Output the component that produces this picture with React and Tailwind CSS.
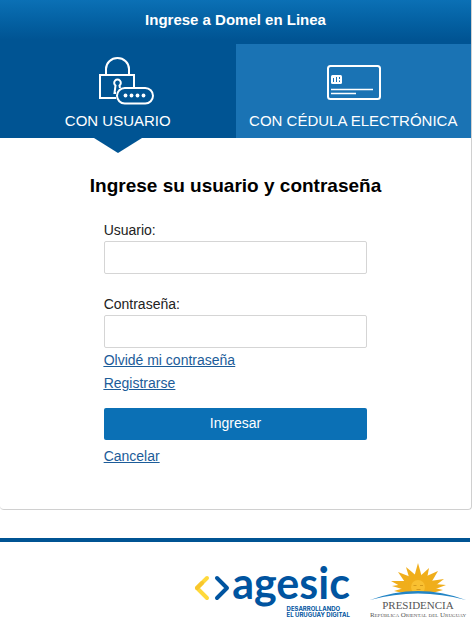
import { useState } from 'react'
import clsx from 'clsx'

const RAYS = [
  'M42 33 L24 29 L41 24 Z',
  'M41 30 L21 19 L43 19 Z',
  'M39 26 L28 10 L46 17 Z',
  'M41 22 L36 5 L49 16 Z',
  'M43 19 L48 1 L53 19 Z',
  'M47 17 L59 6 L56 22 Z',
  'M50 17 L68 9 L58 26 Z',
  'M53 20 L74 17 L57 30 Z',
  'M56 24 L73 28 L55 33 Z',
  'M41 21 L22 24 L42 30 Z',
  'M54 21 L76 23 L55 31 Z',
]

function LockIcon() {
  return (
    <svg width="56" height="50" viewBox="0 0 56 50" fill="none" stroke="white" strokeWidth="2" aria-hidden="true">
      <path d="M8 19 V13 a11.5 11 0 0 1 23 0 V19" />
      <path d="M18 42 H2 V19 H36 V32" />
      <path d="M18 37 H16.500 L17.500 29.500 a3.300 3.300 0 1 1 4 0 L22 32" />
      <rect x="19" y="32" width="36" height="15.500" rx="7.750" />
      <g fill="white" stroke="none">
        <circle cx="27.500" cy="39.500" r="1.900" />
        <circle cx="33.500" cy="39.500" r="1.900" />
        <circle cx="39.500" cy="39.500" r="1.900" />
        <circle cx="45.500" cy="39.500" r="1.900" />
      </g>
    </svg>
  )
}

function CardIcon() {
  return (
    <svg width="56" height="50" viewBox="0 0 56 50" fill="none" stroke="white" aria-hidden="true">
      <rect x="2" y="10" width="52" height="33" rx="2.500" strokeWidth="2" />
      <rect x="5" y="19" width="11" height="9" rx="1.500" fill="white" stroke="none" />
      <path d="M7.500 22 V26 M10.500 21 V26 M13.500 21 V23 M13.500 24.500 V26" stroke="#1a73b4" />
      <path d="M5 33.500 H47 M5 37.500 H30" strokeWidth="1.500" />
    </svg>
  )
}

function Tab({ active, onClick, icon, label }) {
  return (
    <button
      type="button"
      role="tab"
      aria-selected={active}
      onClick={onClick}
      className={clsx(
        'relative flex flex-1 flex-col items-center whitespace-nowrap pt-3 text-[15px] leading-6 text-white',
        active ? 'bg-[#005493]' : 'bg-[#1a73b4]',
      )}
    >
      {icon}
      <span className="mt-[3px]">{label}</span>
      {active && (
        <svg className="absolute top-full left-1/2 -translate-x-1/2" width="48" height="15" viewBox="0 0 48 15" aria-hidden="true">
          <path d="M0 0 H48 L24 15 Z" fill="#005493" />
        </svg>
      )}
    </button>
  )
}

function Field({ id, label, type = 'text', value, onChange }) {
  return (
    <div className="flex flex-col gap-px">
      <label htmlFor={id} className="text-sm text-[#222222]">{label}</label>
      <input
        id={id}
        type={type}
        value={value}
        onChange={(e) => onChange(e.target.value)}
        className="h-[33px] w-full rounded-xs border border-[#d5d5d5] bg-white px-2 text-sm"
      />
    </div>
  )
}

function AgesicLogo() {
  return (
    <div className="flex items-start text-[#0054a0]">
      <svg className="mt-3" width="39" height="28" viewBox="0 0 39 28" fill="none" strokeWidth="4" strokeLinecap="round" strokeLinejoin="round" aria-hidden="true">
        <path d="M14 4 L4 14 L14 24" stroke="#ffd93b" />
        <path d="M4 14 L9 9" stroke="#f8c62c" />
        <path d="M24 4 L34 14 L24 24" stroke="#0054a0" />
      </svg>
      <div className="flex flex-col items-end">
        <span className="font-[Lato,sans-serif] text-[43px] leading-[42px] font-bold">agesic</span>
        <span className="flex flex-col pt-0.5 font-[Inter,sans-serif] text-[6px] leading-[6px] font-bold whitespace-nowrap">
          <span>DESARROLLANDO</span>
          <span>EL URUGUAY DIGITAL</span>
        </span>
      </div>
    </div>
  )
}

function PresidenciaLogo() {
  return (
    <div className="flex flex-col items-center font-['Liberation_Serif',serif] text-[#555555]">
      <svg width="96" height="38" viewBox="0 0 96 38" aria-hidden="true">
        <g fill="#f0ae1b">
          {RAYS.map((d) => (
            <path key={d} d={d} />
          ))}
          <circle cx="48" cy="25" r="10" />
        </g>
        <circle cx="48" cy="25" r="7" fill="#f9c031" />
        <path d="M43.500 23.500 h3 M50 23.500 h3 M46.500 27.500 h4" fill="none" stroke="#d49a1c" />
        <path d="M0 39 Q48 21 96 39 Z" fill="white" />
        <path d="M0 38 Q48 20 96 38 Q48 25 0 38 Z" fill="#2385c6" />
      </svg>
      <span className="text-[11px] leading-[11px]">PRESIDENCIA</span>
      <span className="text-[7px] leading-[9px] whitespace-nowrap [font-variant:small-caps]">República Oriental del Uruguay</span>
    </div>
  )
}

export default function App() {
  const [tab, setTab] = useState('usuario')
  const [usuario, setUsuario] = useState('')
  const [clave, setClave] = useState('')

  return (
    <div className="bg-white font-['Liberation_Sans',Arial,sans-serif] text-black">
      <main className="rounded-b-sm border-r border-b border-[#d0d0d0]">
        <header className="bg-linear-to-b from-[#0b70b5] to-[#005493] to-90% py-2.5 pb-3.5 text-center text-[15px] leading-5 font-bold text-white">
          <h1>Ingrese a Domel en Linea</h1>
        </header>

        <div role="tablist" className="flex h-[94px]">
          <Tab
            active={tab === 'usuario'}
            onClick={() => setTab('usuario')}
            icon={<span className="pl-4"><LockIcon /></span>}
            label="CON USUARIO"
          />
          <Tab
            active={tab === 'cedula'}
            onClick={() => setTab('cedula')}
            icon={<span className="pl-0.5"><CardIcon /></span>}
            label="CON CÉDULA ELECTRÓNICA"
          />
        </div>

        <h2 className="pt-[34px] text-center text-[19px] leading-7 font-bold">Ingrese su usuario y contraseña</h2>

        <form onSubmit={(e) => e.preventDefault()} className="mx-auto w-[56%] pt-5 pb-[43px]">
          <div className="flex flex-col gap-5">
            <Field id="usuario" label="Usuario:" value={usuario} onChange={setUsuario} />
            <Field id="clave" label="Contraseña:" type="password" value={clave} onChange={setClave} />
          </div>
          <div className="flex flex-col items-start gap-[3px] pt-0.5 text-sm text-[#1c5c99] underline">
            <a href="#recuperar">Olvidé mi contraseña</a>
            <a href="#registro">Registrarse</a>
          </div>
          <button type="submit" className="mt-[15px] mb-1.5 h-8 w-full rounded-xs bg-[#0b70b5] pb-0.5 text-sm text-white">
            Ingresar
          </button>
          <a href="#cancelar" className="block text-sm text-[#1c5c99] underline">Cancelar</a>
        </form>
      </main>

      <footer className="mt-7 mr-0.5 flex items-start justify-end gap-5 border-t-4 border-[#005493] pt-5 pr-1">
        <AgesicLogo />
        <PresidenciaLogo />
      </footer>
    </div>
  )
}
